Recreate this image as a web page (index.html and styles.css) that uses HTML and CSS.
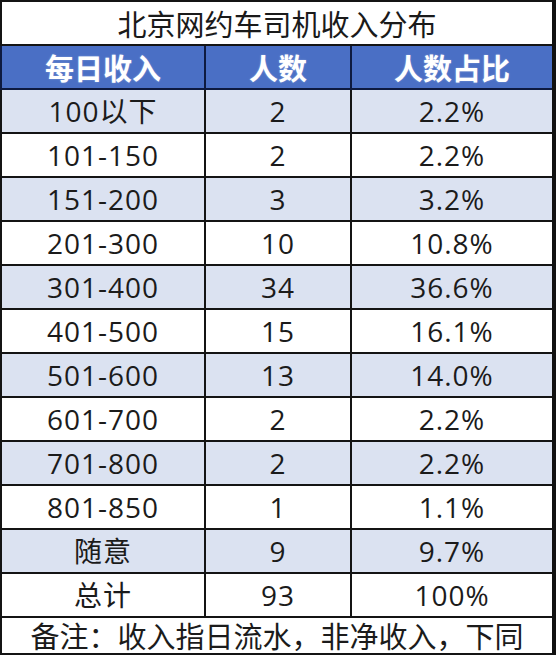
FILE: index.html
```html
<!DOCTYPE html>
<html lang="zh-CN">
<head>
<meta charset="utf-8">
<title>北京网约车司机收入分布</title>
<link rel="stylesheet" href="styles.css">
</head>
<body>
<table class="income">
  <colgroup>
    <col class="col-range">
    <col class="col-count">
    <col class="col-share">
  </colgroup>
  <tr class="title-row"><td colspan="3">北京网约车司机收入分布</td></tr>
  <tr class="head-row"><th>每日收入</th><th>人数</th><th>人数占比</th></tr>
  <tr class="band"><td>100以下</td><td>2</td><td>2.2%</td></tr>
  <tr><td>101-150</td><td>2</td><td>2.2%</td></tr>
  <tr class="band"><td>151-200</td><td>3</td><td>3.2%</td></tr>
  <tr><td>201-300</td><td>10</td><td>10.8%</td></tr>
  <tr class="band"><td>301-400</td><td>34</td><td>36.6%</td></tr>
  <tr><td>401-500</td><td>15</td><td>16.1%</td></tr>
  <tr class="band"><td>501-600</td><td>13</td><td>14.0%</td></tr>
  <tr><td>601-700</td><td>2</td><td>2.2%</td></tr>
  <tr class="band"><td>701-800</td><td>2</td><td>2.2%</td></tr>
  <tr><td>801-850</td><td>1</td><td>1.1%</td></tr>
  <tr class="band"><td>随意</td><td>9</td><td>9.7%</td></tr>
  <tr><td>总计</td><td>93</td><td>100%</td></tr>
  <tr class="note-row"><td colspan="3">备注：收入指日流水，非净收入，下同</td></tr>
</table>
</body>
</html>
```

FILE: styles.css
```css
html, body {
  margin: 0;
  padding: 0;
  background: #ffffff;
}

body {
  font-family: "Open Sans", "Noto Sans CJK SC", sans-serif;
  color: #1b1b1b;
}

.income {
  border-collapse: collapse;
  width: 556px;
  table-layout: fixed;
  border-right: 4px solid #111;
}

.col-range {
  width: 204px;
}

.col-count {
  width: 146px;
}

.income td,
.income th {
  border: 2px solid #141414;
  text-align: center;
  vertical-align: middle;
  padding: 0;
  height: 42px;
  font-size: 28px;
  font-weight: 400;
  letter-spacing: 1px;
  line-height: 1;
}

.title-row td {
  font-family: "Noto Sans CJK SC", sans-serif;
  font-size: 29px;
  letter-spacing: 0;
  color: #1a1a1a;
}

.head-row th {
  font-family: "Noto Sans CJK SC", sans-serif;
  background: #4a6fc5;
  color: #ffffff;
  font-weight: 700;
  font-size: 29px;
  letter-spacing: 0;
  border-color: #0e1a40;
  text-shadow: 0 0 2px rgba(255, 255, 255, 0.35);
}

.band td {
  background: #dbe2f1;
}

.note-row td {
  font-family: "Noto Sans CJK SC", sans-serif;
  height: 35px;
  font-size: 29px;
  letter-spacing: 0;
}
```
